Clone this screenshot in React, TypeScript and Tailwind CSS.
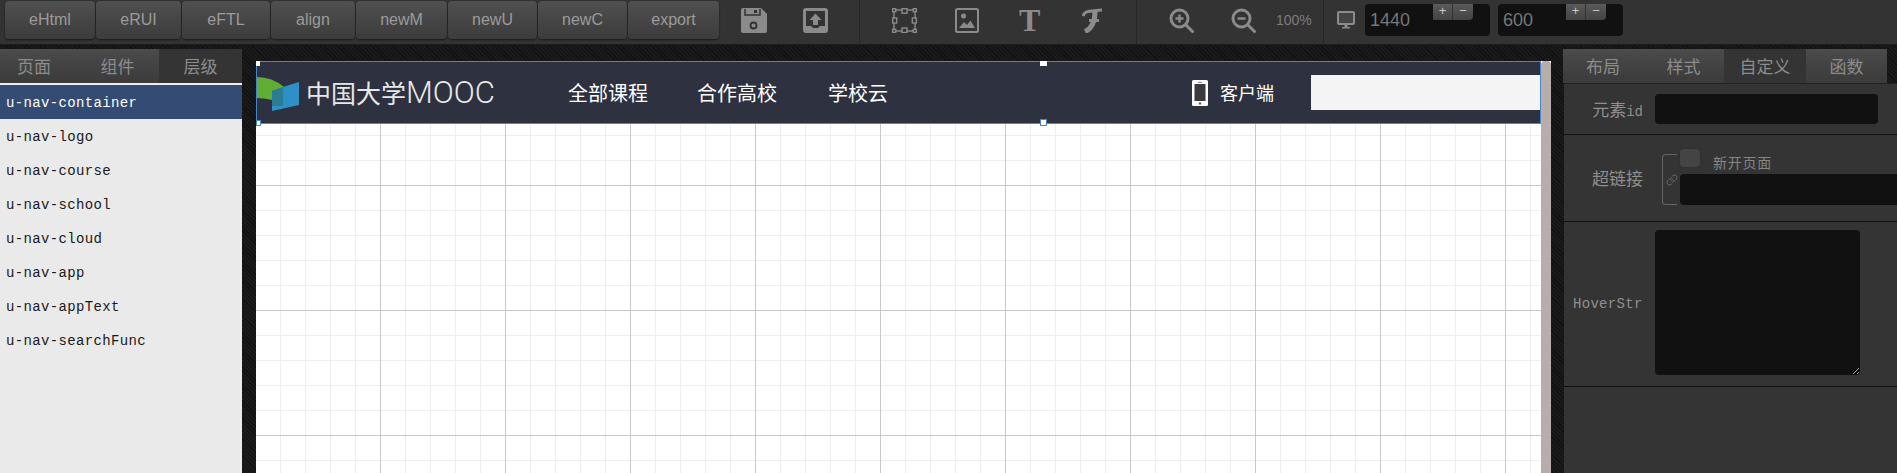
import React from 'react';
import { Link } from 'lucide-react';

const TOOL_BUTTONS = [
  { label: 'eHtml', width: 'w-[90px]' },
  { label: 'eRUI', width: 'w-[85px]' },
  { label: 'eFTL', width: 'w-[88px]' },
  { label: 'align', width: 'w-[84px]' },
  { label: 'newM', width: 'w-[91px]' },
  { label: 'newU', width: 'w-[89px]' },
  { label: 'newC', width: 'w-[89px]' },
  { label: 'export', width: 'w-[91px]' },
];

const LAYERS = [
  'u-nav-container',
  'u-nav-logo',
  'u-nav-course',
  'u-nav-school',
  'u-nav-cloud',
  'u-nav-app',
  'u-nav-appText',
  'u-nav-searchFunc',
];

const GREY = '#8b8b8b';
const DARK = '#333333';

const SaveIcon = () => (
  <svg width="26" height="25" viewBox="0 0 26 25" className="shrink-0">
    <path d="M2 0H20L26 6V23a2 2 0 0 1-2 2H2a2 2 0 0 1-2-2V2a2 2 0 0 1 2-2z" fill={GREY} />
    <path d="M4 1V7H19V1" fill="none" stroke={DARK} strokeWidth="1.5" />
    <rect x="13" y="2" width="3" height="3" fill={DARK} />
    <circle cx="12.5" cy="17.5" r="3" fill={GREY} stroke={DARK} strokeWidth="1.8" />
  </svg>
);

const UploadIcon = () => (
  <svg width="25" height="25" viewBox="0 0 25 25" className="shrink-0">
    <rect width="25" height="25" rx="3" fill={GREY} />
    <path d="M3 3H22V18H17L15 20H10L8 18H3Z" fill={DARK} />
    <path d="M12.5 5.5L18.5 12H15V17H10V12H6.5Z" fill={GREY} />
  </svg>
);

const SelectIcon = () => (
  <svg width="25" height="25" viewBox="0 0 25 25" fill="none" stroke={GREY} strokeWidth="1.4" className="shrink-0">
    <rect x="2" y="2" width="21" height="21" />
    <rect x="0.7" y="0.7" width="3" height="3" fill={DARK} />
    <rect x="10" y="0.7" width="5" height="4.5" fill={DARK} />
    <rect x="21.3" y="0.7" width="3" height="3" fill={DARK} />
    <rect x="0.7" y="10" width="4" height="5" fill={DARK} />
    <rect x="20.3" y="10" width="4" height="5" fill={DARK} />
    <rect x="0.7" y="21.3" width="3" height="3" fill={DARK} />
    <rect x="10" y="20" width="5" height="4.5" fill={DARK} />
    <rect x="21.3" y="21.3" width="3" height="3" fill={DARK} />
  </svg>
);

const ImageIcon = () => (
  <svg width="24" height="25" viewBox="0 0 24 25" className="shrink-0">
    <rect x="1" y="1" width="22" height="23" rx="1.5" fill="none" stroke={GREY} strokeWidth="2" />
    <circle cx="8.5" cy="8" r="2.5" fill={GREY} />
    <path d="M4 20L9 14L12 17L15.5 12.5L20 20Z" fill={GREY} />
  </svg>
);

// function icon, a swashed italic f
const FuncIcon = () => (
  <svg width="20" height="25" viewBox="0 0 20 25" fill="none" stroke={GREY} className="shrink-0">
    <path d="M1 8C3 2 8 3.5 20 2" strokeWidth="3" />
    <path d="M13 3C13 12 11 20 3 23.5" strokeWidth="5" />
    <path d="M7 12.5H17" strokeWidth="3" />
  </svg>
);

const ZoomIcon = ({ plus }: { plus?: boolean }) => (
  <svg width="25" height="25" viewBox="0 0 25 25" fill="none" stroke={GREY} strokeWidth="3" className="shrink-0">
    <circle cx="10.5" cy="10.5" r="8.5" />
    <path d="M17 17L23.5 23.5" strokeLinecap="round" />
    <path d="M6.5 10.5H14.5" strokeWidth="2.5" />
    {plus && <path d="M10.5 6.5V14.5" strokeWidth="2.5" />}
  </svg>
);

const MonitorIcon = () => (
  <svg width="18" height="18" viewBox="0 0 18 18" className="shrink-0">
    <rect x="1" y="1" width="16" height="12" rx="1" fill="#444444" stroke={GREY} strokeWidth="2" />
    <path d="M7.5 14H10.5V16H13V17.5H5V16H7.5Z" fill={GREY} />
  </svg>
);

const PhoneIcon = () => (
  <svg width="16" height="26" viewBox="0 0 16 26" className="shrink-0">
    <rect width="16" height="26" rx="1.5" fill="#ffffff" />
    <rect x="2.5" y="4" width="11" height="17" fill="#3a3a3a" />
    <rect x="6" y="1.8" width="4" height="1" fill="#777777" />
    <circle cx="8" cy="23.4" r="1.2" fill="#555555" />
  </svg>
);

const MoocLogo = () => (
  <svg width="43" height="42" viewBox="257 70 43 42" className="shrink-0">
    <path d="M257 75Q272 75 284 85L272 89V98Q264 96 257 96Z" fill="#62ae34" />
    <path d="M272 89L283 85L299 80V103L272 109Z" fill="#2e90c6" />
    <path d="M272 89L283 85V104L272 104Z" fill="#2a7d92" />
  </svg>
);

const SizeInput = ({ value }: { value: string }) => (
  <div className="relative w-[125px] h-8">
    <input
      readOnly
      value={value}
      className="w-full h-full rounded bg-[#111111] pl-[5px] text-[18px] text-[#777777] font-['Liberation_Sans',sans-serif] outline-none"
    />
    <div className="absolute top-0 right-[17px] flex h-4 w-10 text-[13px] leading-[14px] text-[#c8c8c8] font-['Liberation_Sans',sans-serif]">
      <span className="w-5 text-center bg-gradient-to-b from-[#5a5a5a] to-[#444444] border-r border-[#333333]">+</span>
      <span className="w-5 text-center bg-gradient-to-b from-[#5a5a5a] to-[#444444] rounded-br">−</span>
    </div>
  </div>
);

const Tab = ({ label, width, active, shift }: { label: string; width: string; active?: boolean; shift?: boolean }) => (
  <div
    className={`${width} ${shift ? 'pr-2' : ''} ${active ? 'bg-[#343434]' : 'bg-gradient-to-b from-[#4b4b4b] to-[#3b3b3b]'} flex h-full items-center justify-center text-[17px] text-[#8c8c8c]`}
  >
    {label}
  </div>
);

export default function App() {
  return (
    <div className="w-[1897px] h-[473px] overflow-hidden flex flex-col bg-[repeating-linear-gradient(45deg,#111111_0,#111111_1px,#1a1a1a_1px,#1a1a1a_3px)] font-['Noto_Sans_CJK_SC',sans-serif]">
      {/* top toolbar */}
      <div className="h-[45px] shrink-0 flex bg-[#333333] border-b border-[#1c1c1c]">
        <div className="w-[860px] flex items-center border-r border-[#272727] pl-[5px] pb-[4px]">
          <div className="flex gap-px">
            {TOOL_BUTTONS.map(b => (
              <div
                key={b.label}
                className={`${b.width} h-[38px] flex items-center justify-center rounded bg-gradient-to-b from-[#505050] to-[#3c3c3c] shadow-[0_1px_2px_#1a1a1a] text-[16px] text-[#9b9b9b] font-['Liberation_Sans',sans-serif]`}
              >
                {b.label}
              </div>
            ))}
          </div>
          <div className="ml-[22px] flex gap-[36px]">
            <SaveIcon />
            <UploadIcon />
          </div>
        </div>

        <div className="w-[277px] flex items-center border-r border-[#272727] pl-[32px] pb-[4px]">
          <SelectIcon />
          <div className="ml-[38px]"><ImageIcon /></div>
          <span className="ml-[40px] w-[21px] text-[32px] leading-[25px] font-bold text-[#8b8b8b] font-['Liberation_Serif',serif]">T</span>
          <div className="ml-[42px]"><FuncIcon /></div>
        </div>

        <div className="w-[187px] flex items-center border-r border-[#272727] pl-[32px] pb-[4px]">
          <ZoomIcon plus />
          <div className="ml-[37px]"><ZoomIcon /></div>
          <span className="ml-[20px] text-[14px] text-[#7d7d7d] font-['Liberation_Sans',sans-serif]">100%</span>
        </div>

        <div className="flex items-center pl-[13px] pb-[4px]">
          <MonitorIcon />
          <div className="ml-[10px]"><SizeInput value="1440" /></div>
          <div className="ml-2"><SizeInput value="600" /></div>
        </div>
      </div>

      <div className="flex h-[428px]">
        {/* layer list */}
        <aside className="w-[242px] mt-1 flex flex-col bg-[#eaeaea]">
          <div className="h-[34px] flex shrink-0">
            <Tab label="页面" width="w-[76px]" shift />
            <Tab label="组件" width="w-[83px]" />
            <Tab label="层级" width="w-[83px]" active />
          </div>
          <div className="h-[2px] bg-[#eeeeee]" />
          {LAYERS.map((name, i) => (
            <div
              key={name}
              className={`h-[34px] flex items-center pl-[6px] pt-[2px] text-[14px] tracking-[0.35px] font-['Liberation_Mono',monospace] ${i === 0 ? 'bg-[#344b74] text-white' : 'text-[#1a1a1a]'}`}
            >
              {name}
            </div>
          ))}
        </aside>

        {/* canvas */}
        <main className="relative w-[1295px] ml-[14px] mt-4 overflow-hidden pr-[10px] bg-white bg-[linear-gradient(to_right,transparent_124px,#c8c8c8_124px),linear-gradient(to_bottom,transparent_124px,#c8c8c8_124px),linear-gradient(to_right,transparent_24px,#eeeeee_24px),linear-gradient(to_bottom,transparent_24px,#eeeeee_24px)] bg-size-[125px_125px,125px_125px,25px_25px,25px_25px]">
          <div className="relative h-[63px] flex items-center bg-[#2e3140] border border-[#4a86d0] text-white text-[20px]">
            <div className="w-[236px] flex items-center shrink-0">
              <MoocLogo />
              <span className="ml-[6px] text-[25px] leading-none whitespace-nowrap text-[#e8e8e8]">中国大学</span>
              <span className="text-[31px] leading-none text-[#e8e8e8] font-['Roboto',sans-serif] font-light">MOOC</span>
            </div>
            <span className="ml-[75px] w-20 shrink-0">全部课程</span>
            <span className="ml-[49px] w-20 shrink-0">合作高校</span>
            <span className="ml-[51px] w-[60px] shrink-0">学校云</span>
            <div className="ml-[304px]"><PhoneIcon /></div>
            <span className="ml-3 w-[54px] shrink-0 text-[18px]">客户端</span>
            <div className="ml-[37px] flex-1 h-[35px] bg-[#f4f4f4]" />

            {/* selection handles */}
            <div className="absolute -left-px -top-px w-[4px] h-[5px] bg-white" />
            <div className="absolute -left-px -bottom-[3px] w-[5px] h-[6px] bg-white border border-[#4a86d0]" />
            <div className="absolute left-[783px] -top-px w-[7px] h-[5px] bg-white" />
            <div className="absolute left-[783px] -bottom-[3px] w-[7px] h-[7px] bg-white border border-[#4a86d0]" />
          </div>
          <div className="absolute top-0 right-0 bottom-0 w-[10px] rounded-t bg-[#b8adad]" />
        </main>

        {/* props panel */}
        <aside className="w-[334px] ml-3 mt-1 flex flex-col">
          <div className="h-[34px] flex shrink-0">
            <Tab label="布局" width="w-[80px]" />
            <Tab label="样式" width="w-[81px]" />
            <Tab label="自定义" width="w-[82px]" active />
            <Tab label="函数" width="w-[81px]" />
          </div>
          <div className="ml-px flex-1 flex flex-col bg-[#343434] border-t border-[#232323] text-[#8f8f8f] overflow-hidden">
            <div className="h-[51px] shrink-0 flex items-center border-b border-[#111111]">
              <div className="w-[79px] shrink-0 text-right text-[17px]">
                元素<span className="text-[14px] font-['Liberation_Mono',monospace]">id</span>
              </div>
              <input readOnly className="ml-3 w-[223px] h-[30px] rounded bg-[#111111] outline-none" />
            </div>

            <div className="h-[87px] shrink-0 flex items-start border-b border-[#111111]">
              <div className="w-[79px] shrink-0 mt-[30px] text-right text-[17px]">超链接</div>
              <div className="relative ml-[19px] mt-[19px] w-[15px] h-[51px] shrink-0 rounded-l border-l border-t border-b border-[#666666]">
                <Link size={12} className="absolute left-[3px] top-[19px] text-[#666666]" />
              </div>
              <div className="ml-[3px] mt-[14px] flex flex-col shrink-0">
                <div className="flex items-center h-[18px]">
                  <div className="w-5 h-[18px] rounded-sm bg-[#444444] shadow-[0_0_2px_#2a2a2a]" />
                  <span className="ml-[13px] mt-[8px] text-[14px] tracking-[0.75px] text-[#858585]">新开页面</span>
                </div>
                <input readOnly className="mt-[7px] w-[260px] h-[31px] rounded-l bg-[#111111] outline-none" />
              </div>
            </div>

            <div className="h-[165px] shrink-0 flex items-start pt-2 border-b border-[#111111]">
              <div className="w-[79px] shrink-0 mt-[64px] pl-[9px] text-[14px] tracking-[0.3px] font-['Liberation_Mono',monospace]">HoverStr</div>
              <textarea readOnly className="ml-3 w-[205px] h-[145px] rounded bg-[#111111] outline-none" />
            </div>
          </div>
        </aside>
      </div>
    </div>
  );
}
